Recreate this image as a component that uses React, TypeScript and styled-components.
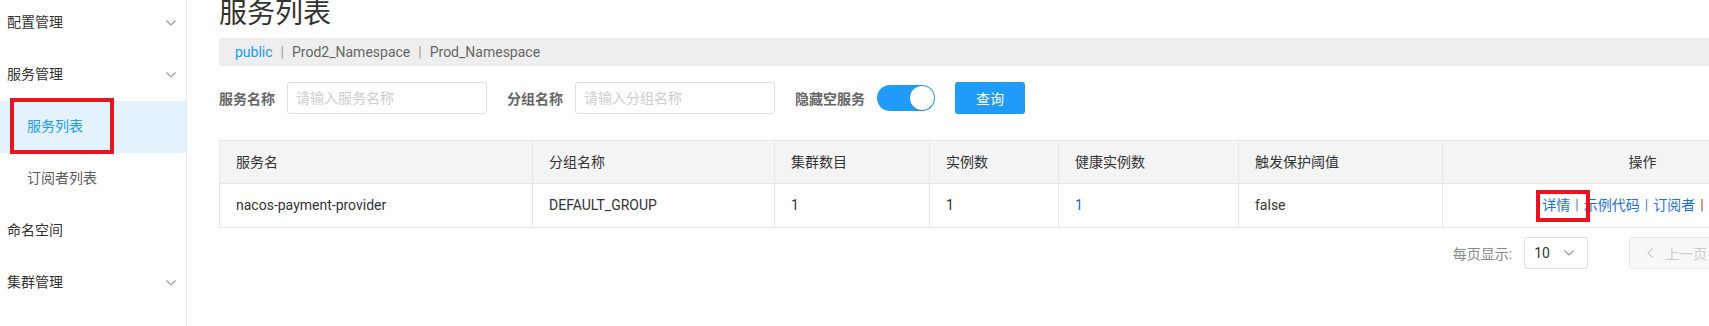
import React from 'react';
import styled, { createGlobalStyle } from 'styled-components';

const GlobalStyle = createGlobalStyle`
  html, body {
    margin: 0;
    padding: 0;
    background: #fff;
  }
  body {
    font-family: Roboto, "Noto Sans CJK SC", "Helvetica Neue", sans-serif;
    font-size: 14px;
    color: #333;
    overflow: hidden;
  }
  * {
    box-sizing: border-box;
  }
`;

const menu = [
    { label: '配置管理', arrow: true },
    { label: '服务管理', arrow: true },
    { label: '服务列表', sub: true, active: true },
    { label: '订阅者列表', sub: true },
    { label: '命名空间' },
    { label: '集群管理', arrow: true },
];

const columns = [
    { title: '服务名', width: 313 },
    { title: '分组名称', width: 242 },
    { title: '集群数目', width: 155 },
    { title: '实例数', width: 129 },
    { title: '健康实例数', width: 180 },
    { title: '触发保护阈值', width: 204 },
    { title: '操作', width: 400, center: true },
];

const Chevron: React.FC<{ dir?: 'down' | 'left' }> = ({ dir = 'down' }) =>
    dir === 'down' ? (
        <svg width="10" height="6" viewBox="0 0 10 6">
            <polyline points="0.5,0.5 5,5 9.5,0.5" fill="none" stroke="#999" strokeWidth="1.2" />
        </svg>
    ) : (
        <svg width="6" height="10" viewBox="0 0 6 10">
            <polyline points="5.5,0.5 1,5 5.5,9.5" fill="none" stroke="#ccc" strokeWidth="1.2" />
        </svg>
    );

const App: React.FC = () => {
    return (
        <Page>
            <GlobalStyle />
            <Sidebar>
                {menu.map((m) => (
                    <MenuItem key={m.label} $sub={m.sub} $active={m.active}>
                        <span>{m.label}</span>
                        {m.arrow ? <Chevron /> : null}
                        {m.active ? <MarkBox $left={10} $top={-3} $width={104} $height={56} /> : null}
                    </MenuItem>
                ))}
            </Sidebar>
            <Main>
                <Content>
                    <Title>服务列表</Title>
                    <Namespaces>
                        <NsLink $current>public</NsLink>
                        <NsSep>|</NsSep>
                        <NsLink>Prod2_Namespace</NsLink>
                        <NsSep>|</NsSep>
                        <NsLink>Prod_Namespace</NsLink>
                    </Namespaces>
                    <SearchForm>
                        <FormItem>
                            <Label>服务名称</Label>
                            <Input placeholder="请输入服务名称" />
                        </FormItem>
                        <FormItem>
                            <Label>分组名称</Label>
                            <Input placeholder="请输入分组名称" />
                        </FormItem>
                        <FormItem>
                            <Label>隐藏空服务</Label>
                            <Switch>
                                <Knob />
                            </Switch>
                        </FormItem>
                        <PrimaryButton>查询</PrimaryButton>
                    </SearchForm>
                    <Table>
                        <colgroup>
                            {columns.map((c) => (
                                <col key={c.title} style={{ width: c.width }} />
                            ))}
                        </colgroup>
                        <thead>
                            <tr>
                                {columns.map((c) => (
                                    <Th key={c.title} $center={c.center}>{c.title}</Th>
                                ))}
                            </tr>
                        </thead>
                        <tbody>
                            <tr>
                                <Td>nacos-payment-provider</Td>
                                <Td>DEFAULT_GROUP</Td>
                                <Td>1</Td>
                                <Td>1</Td>
                                <Td $blue>1</Td>
                                <Td>false</Td>
                                <OpCell>
                                    <Marked>
                                        <OpLink>详情</OpLink>
                                        <MarkBox $left={-6} $top={-5} $width={54} $height={32} />
                                    </Marked>
                                    <OpSep>|</OpSep>
                                    <OpLink>示例代码</OpLink>
                                    <OpSep>|</OpSep>
                                    <OpLink>订阅者</OpLink>
                                    <OpSep $danger>|</OpSep>
                                    <OpLink $danger>删除</OpLink>
                                </OpCell>
                            </tr>
                        </tbody>
                    </Table>
                    <Pagination>
                        <SizeLabel>每页显示:</SizeLabel>
                        <SizeSelect>
                            <span>10</span>
                            <Chevron />
                        </SizeSelect>
                        <Pager>
                            <PageButton $disabled $wide>
                                <Chevron dir="left" />
                                <span>上一页</span>
                            </PageButton>
                            <PageButton $current>1</PageButton>
                            <PageButton $disabled>下一页</PageButton>
                        </Pager>
                    </Pagination>
                </Content>
            </Main>
        </Page>
    );
};

const Page = styled.div`
    display: flex;
    width: 1709px;
    height: 326px;
    overflow: hidden;
`;

const Sidebar = styled.nav`
    width: 187px;
    flex-shrink: 0;
    margin-top: -3px;
    border-right: 1px solid #e8e8e8;
`;

const MenuItem = styled.div<{ $sub?: boolean; $active?: boolean }>`
    position: relative;
    height: 52px;
    display: flex;
    align-items: center;
    justify-content: space-between;
    padding: 0 10px 4px ${(p) => (p.$sub ? '27px' : '7px')};
    font-size: 14px;
    color: ${(p) => (p.$active ? '#209bfa' : p.$sub ? '#5c5c5c' : '#333')};
    background: ${(p) => (p.$active ? '#e4f2fd' : 'transparent')};

    svg {
        margin-top: 4px;
    }
`;

const MarkBox = styled.div<{ $left: number; $top: number; $width: number; $height: number }>`
    position: absolute;
    left: ${(p) => p.$left}px;
    top: ${(p) => p.$top}px;
    width: ${(p) => p.$width}px;
    height: ${(p) => p.$height}px;
    border: 4px solid #e8141f;
    pointer-events: none;
`;

const Main = styled.main`
    flex: 1;
    min-width: 0;
    padding-left: 32px;
    overflow: hidden;
`;

const Content = styled.div`
    width: 1623px;
`;

const Title = styled.h1`
    margin: 0 0 10px;
    font-size: 28px;
    line-height: 28px;
    font-weight: normal;
    color: #333;
`;

const Namespaces = styled.div`
    height: 28px;
    display: flex;
    align-items: center;
    padding: 0 16px 1px;
    background: #eee;
`;

const NsLink = styled.span<{ $current?: boolean }>`
    color: ${(p) => (p.$current ? '#209bfa' : '#666')};
`;

const NsSep = styled.span`
    margin: 0 8px;
    color: #999;
`;

const SearchForm = styled.div`
    margin-top: 16px;
    height: 32px;
    display: flex;
    align-items: center;
`;

const FormItem = styled.div`
    display: flex;
    align-items: center;
    margin-right: 20px;
`;

const Label = styled.label`
    margin-right: 12px;
    font-weight: bold;
    color: #666;
`;

const Input = styled.input`
    width: 200px;
    height: 32px;
    padding: 0 8px;
    border: 1px solid #dcdee3;
    border-radius: 3px;
    font-family: inherit;
    font-size: 14px;
    color: #333;
    outline: none;
    &::placeholder {
        color: #ccc;
    }
`;

const Switch = styled.div`
    width: 58px;
    height: 26px;
    padding: 1px;
    display: flex;
    justify-content: flex-end;
    border-radius: 13px;
    background: #209bfa;
`;

const Knob = styled.div`
    width: 24px;
    height: 24px;
    border-radius: 50%;
    background: #fff;
    box-shadow: 0 1px 1px rgba(0, 0, 0, 0.15);
`;

const PrimaryButton = styled.button`
    width: 70px;
    height: 32px;
    border: none;
    border-radius: 3px;
    background: #209bfa;
    color: #fff;
    font-family: inherit;
    font-size: 14px;
    padding: 0;
`;

const Table = styled.table`
    margin-top: 26px;
    width: 1623px;
    table-layout: fixed;
    border-collapse: collapse;
    border: 1px solid #e6e7eb;
`;

const Th = styled.th<{ $center?: boolean }>`
    height: 43px;
    padding: 0 16px 1px;
    border: 1px solid #e6e7eb;
    background: #f4f4f5;
    font-weight: normal;
    text-align: ${(p) => (p.$center ? 'center' : 'left')};
    color: #333;
    line-height: 20px;
`;

const Td = styled.td<{ $blue?: boolean }>`
    height: 44px;
    padding: 0 16px 2px;
    border: 1px solid #e6e7eb;
    text-align: left;
    color: ${(p) => (p.$blue ? '#1f63c6' : '#333')};
    line-height: 20px;
    white-space: nowrap;
`;

const OpCell = styled(Td)`
    padding: 0 22px 2px 16px;
    text-align: center;
`;

const Marked = styled.span`
    position: relative;
    display: inline-block;
`;

const OpLink = styled.a<{ $danger?: boolean }>`
    color: ${(p) => (p.$danger ? '#d23c26' : '#1e6fde')};
    cursor: pointer;
`;

const OpSep = styled.span<{ $danger?: boolean }>`
    margin: 0 5px;
    color: ${(p) => (p.$danger ? '#a0522d' : '#5b7fb8')};
`;

const Pagination = styled.div`
    margin-top: 9px;
    height: 32px;
    display: flex;
    align-items: center;
    justify-content: flex-end;
`;

const SizeLabel = styled.span`
    color: #888;
    margin-right: 12px;
`;

const SizeSelect = styled.div`
    width: 64px;
    height: 32px;
    display: flex;
    align-items: center;
    justify-content: space-between;
    padding: 0 13px 0 9px;
    border: 1px solid #dcdee3;
    border-radius: 3px;
    color: #333;
`;

const Pager = styled.div`
    display: flex;
    align-items: center;
    gap: 8px;
    margin-left: 41px;
`;

const PageButton = styled.div<{ $disabled?: boolean; $current?: boolean; $wide?: boolean }>`
    height: 32px;
    min-width: 32px;
    display: flex;
    align-items: center;
    justify-content: center;
    gap: 12px;
    padding: ${(p) => (p.$wide ? '0 16px 0 17px' : '0 12px')};
    border: 1px solid ${(p) => (p.$current ? '#209bfa' : '#e6e7eb')};
    border-radius: 3px;
    background: ${(p) => (p.$disabled ? '#f7f8fa' : '#fff')};
    color: ${(p) => (p.$disabled ? '#ccc' : p.$current ? '#209bfa' : '#333')};
`;

export default App;
